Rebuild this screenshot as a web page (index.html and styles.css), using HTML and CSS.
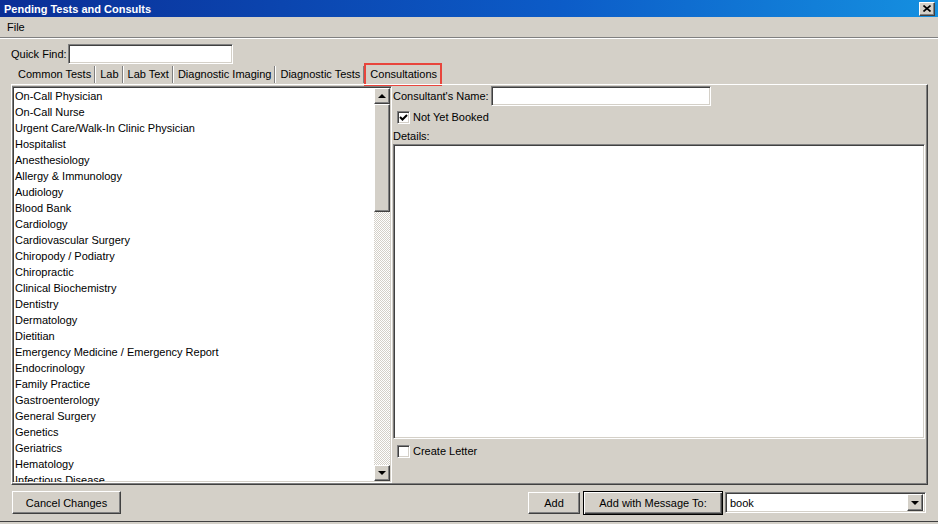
FILE: index.html
```html
<!DOCTYPE html>
<html lang="en">
<head>
    <meta charset="UTF-8">
    <meta name="viewport" content="width=device-width, initial-scale=1.0">
    <title>Pending Tests and Consults</title>
    <link rel="stylesheet" href="styles.css">
</head>
<body>
    <div class="window">
        <div class="title-bar">
            <span class="title">Pending Tests and Consults</span>
            <button type="button" class="close-btn">
                <svg width="8" height="7" viewBox="0 0 8 7"><path d="M0.5 0.5 L7.5 6.5 M7.5 0.5 L0.5 6.5" stroke="#000" stroke-width="1.6" fill="none"/></svg>
            </button>
        </div>

        <div class="menu-bar">
            <span class="menu-item">File</span>
        </div>

        <div class="quick-find">
            <label for="quick-find">Quick Find:</label>
            <input type="text" id="quick-find" class="sunken">
        </div>

        <div class="tabs">
            <span class="tab">Common Tests</span>
            <span class="tab">Lab</span>
            <span class="tab">Lab Text</span>
            <span class="tab">Diagnostic Imaging</span>
            <span class="tab">Diagnostic Tests</span>
            <span class="tab active">Consultations</span>
        </div>

        <div class="tab-panel">
            <div class="list-box sunken">
                <ul class="list-items">
                    <li>On-Call Physician</li>
                    <li>On-Call Nurse</li>
                    <li>Urgent Care/Walk-In Clinic Physician</li>
                    <li>Hospitalist</li>
                    <li>Anesthesiology</li>
                    <li>Allergy &amp; Immunology</li>
                    <li>Audiology</li>
                    <li>Blood Bank</li>
                    <li>Cardiology</li>
                    <li>Cardiovascular Surgery</li>
                    <li>Chiropody / Podiatry</li>
                    <li>Chiropractic</li>
                    <li>Clinical Biochemistry</li>
                    <li>Dentistry</li>
                    <li>Dermatology</li>
                    <li>Dietitian</li>
                    <li>Emergency Medicine / Emergency Report</li>
                    <li>Endocrinology</li>
                    <li>Family Practice</li>
                    <li>Gastroenterology</li>
                    <li>General Surgery</li>
                    <li>Genetics</li>
                    <li>Geriatrics</li>
                    <li>Hematology</li>
                    <li>Infectious Disease</li>
                </ul>
                <div class="scrollbar">
                    <div class="scroll-btn raised"><span class="arrow-up"></span></div>
                    <div class="scroll-thumb raised"></div>
                    <div class="scroll-track"></div>
                    <div class="scroll-btn raised"><span class="arrow-down"></span></div>
                </div>
            </div>

            <div class="consult-form">
                <div class="name-row">
                    <label for="consultant-name">Consultant's Name:</label>
                    <input type="text" id="consultant-name" class="sunken">
                </div>
                <div class="check-row">
                    <span class="checkbox sunken">
                        <svg width="9" height="9" viewBox="0 0 9 9"><polyline points="1,4 3.5,6.5 8,2" stroke="#000" stroke-width="2" fill="none"/></svg>
                    </span>
                    <span>Not Yet Booked</span>
                </div>
                <div class="details-label">Details:</div>
                <textarea class="details sunken"></textarea>
                <div class="check-row letter-row">
                    <span class="checkbox sunken"></span>
                    <span>Create Letter</span>
                </div>
            </div>
        </div>

        <div class="bottom-bar">
            <button type="button" class="btn raised cancel-btn">Cancel Changes</button>
            <div class="spacer"></div>
            <button type="button" class="btn raised add-btn">Add</button>
            <button type="button" class="btn default-btn">Add with Message To:</button>
            <div class="combo sunken">
                <span class="combo-value">book</span>
                <span class="combo-btn raised"><span class="arrow-down"></span></span>
            </div>
        </div>
    </div>
</body>
</html>
```

FILE: styles.css
```css
* {
    box-sizing: border-box;
}

body {
    margin: 0;
    width: 938px;
    height: 524px;
    background-color: #d4d0c8;
    font-family: "Liberation Sans", Arial, sans-serif;
    font-size: 11px;
    color: #000;
    overflow: hidden;
}

.window {
    width: 938px;
    height: 522px;
    border-bottom: 1px solid #404040;
    display: flex;
    flex-direction: column;
}

/* sunken / raised classic borders */
.sunken {
    background-color: #fff;
    border: 1px solid;
    border-color: #808080 #fff #fff #808080;
    box-shadow: inset 1px 1px #404040, inset -1px -1px #d4d0c8;
}

.raised {
    background-color: #d4d0c8;
    border: 1px solid;
    border-color: #fff #404040 #404040 #fff;
    box-shadow: inset -1px -1px #808080;
}

.title-bar {
    height: 17px;
    display: flex;
    align-items: center;
    justify-content: space-between;
    padding: 0 3px 0 4px;
    background: linear-gradient(to right, #0a2e96, #0c5cc8 60%, #1590e0);
}

.title {
    color: #fff;
    font-weight: bold;
    font-size: 11px;
}

.close-btn {
    width: 16px;
    height: 14px;
    padding: 0;
    display: flex;
    align-items: center;
    justify-content: center;
    background-color: #d4d0c8;
    border: 1px solid;
    border-color: #fff #404040 #404040 #fff;
    box-shadow: inset -1px -1px #808080;
}

.menu-bar {
    height: 22px;
    padding: 0 7px 2px;
    display: flex;
    align-items: center;
    border-bottom: 1px solid #fff;
    box-shadow: inset 0 -2px 0 -1px #808080;
}

.quick-find {
    height: 20px;
    margin-top: 5px;
    padding-left: 11px;
    display: flex;
    align-items: center;
}

.quick-find label {
    width: 57px;
}

.quick-find input {
    width: 165px;
    height: 20px;
    padding: 0 3px;
    font: inherit;
    outline: none;
}

.tabs {
    height: 19px;
    margin-top: 1px;
    margin-left: 14px;
    display: flex;
    align-items: center;
}

.tab {
    height: 17px;
    line-height: 17px;
    padding: 0 3px 0 4px;
    border-right: 1px solid #808080;
    box-shadow: 1px 0 0 #fff;
    margin-right: 1px;
    white-space: nowrap;
}

.tab.active {
    border-right: none;
    box-shadow: none;
    margin-left: 1px;
    padding: 0 3px 0 4px;
    height: 19px;
    line-height: 19px;
    outline: 2px solid #e8453c;
}

.tab-panel {
    height: 401px;
    margin-left: 11px;
    width: 917px;
    display: flex;
    gap: 1px;
    border-top: 1px solid #fff;
    border-left: 1px solid #fff;
    border-right: 1px solid #404040;
    border-bottom: 1px solid #404040;
    box-shadow: inset -1px -1px #808080;
}

.list-box {
    width: 380px;
    height: 397px;
    margin-top: 1px;
    display: flex;
    overflow: hidden;
}

.list-items {
    flex: 1;
    list-style: none;
    margin: 0;
    padding: 1px 0 0 2px;
    overflow: hidden;
}

.list-items li {
    height: 16px;
    line-height: 16px;
    white-space: nowrap;
}

.scrollbar {
    width: 16px;
    display: flex;
    flex-direction: column;
    margin: 1px 1px 1px 0;
}

.scroll-btn {
    height: 16px;
    display: flex;
    align-items: center;
    justify-content: center;
}

.scroll-thumb {
    height: 108px;
}

.scroll-track {
    flex: 1;
    background: repeating-conic-gradient(#fff 0 25%, #d4d0c8 0 50%) 0 0 / 2px 2px;
}

.arrow-up {
    width: 0;
    height: 0;
    border-left: 4px solid transparent;
    border-right: 4px solid transparent;
    border-bottom: 4px solid #000;
}

.arrow-down {
    width: 0;
    height: 0;
    border-left: 4px solid transparent;
    border-right: 4px solid transparent;
    border-top: 4px solid #000;
}

.consult-form {
    width: 533px;
    display: flex;
    flex-direction: column;
}

.name-row {
    height: 20px;
    margin-top: 1px;
    display: flex;
    align-items: center;
}

.name-row label {
    width: 98px;
}

.name-row input {
    width: 220px;
    height: 20px;
    padding: 0 3px;
    font: inherit;
    outline: none;
}

.check-row {
    height: 22px;
    display: flex;
    align-items: center;
    padding-left: 4px;
}

.checkbox {
    width: 13px;
    height: 13px;
    margin-right: 3px;
    display: flex;
    align-items: center;
    justify-content: center;
}

.details-label {
    height: 16px;
    line-height: 16px;
}

.details {
    width: 532px;
    height: 295px;
    resize: none;
    outline: none;
    font: inherit;
}

.letter-row {
    height: 24px;
}

.bottom-bar {
    flex: 1;
    display: flex;
    align-items: flex-start;
    padding: 6px 12px 0 12px;
}

.spacer {
    flex: 1;
}

.btn {
    height: 23px;
    padding: 0;
    font: inherit;
    color: #000;
}

.cancel-btn {
    width: 109px;
}

.add-btn {
    width: 52px;
    margin-top: 1px;
    height: 22px;
}

.default-btn {
    width: 140px;
    margin-left: 3px;
    height: 24px;
    background-color: #d4d0c8;
    border: 1px solid #000;
    box-shadow: inset 1px 1px #fff, inset -1px -1px #404040, inset -2px -2px #808080;
}

.combo {
    width: 201px;
    height: 21px;
    margin-left: 2px;
    margin-top: 1px;
    display: flex;
    align-items: center;
    justify-content: space-between;
    padding: 0 2px 0 4px;
}

.combo-btn {
    width: 16px;
    height: 17px;
    display: flex;
    align-items: center;
    justify-content: center;
}
```
